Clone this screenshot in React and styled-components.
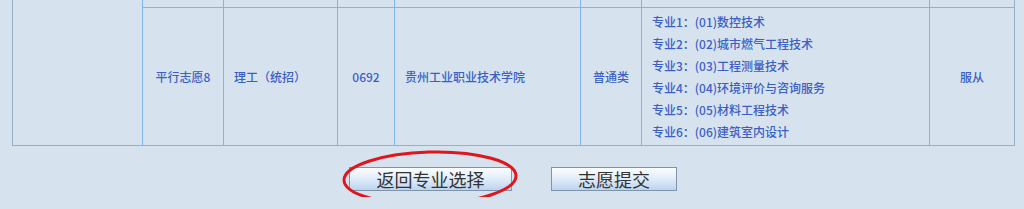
import React from 'react';
import styled, { createGlobalStyle } from 'styled-components';

const GlobalStyle = createGlobalStyle`
    html, body {
        margin: 0;
        padding: 0;
        background: #d6e3ef;
        overflow: hidden;
    }
    body {
        font-family: "Noto Sans CJK SC", "DejaVu Sans", sans-serif;
    }
`;

const Page = styled.div`
    width: 1024px;
    height: 209px;
    padding-left: 12px;
    box-sizing: border-box;
`;

const Table = styled.table`
    width: 1003px;
    margin-top: -12px;
    border-collapse: collapse;
    table-layout: fixed;
    border: 1px solid #98aec4;
    font-size: 12px;
    font-weight: 500;
    color: #3c5fc6;
`;

const Cell = styled.td`
    border: 1px solid #7fb7ec;
    padding: 0 ${(p) => (p.$left ? '10px' : '0')};
    text-align: ${(p) => (p.$left ? 'left' : 'center')};
    vertical-align: middle;
    height: ${(p) => p.$h || 'auto'};
    line-height: 16px;
    white-space: nowrap;
    &:last-child {
        border-right: 1px solid #98aec4;
    }
`;

const GroupCell = styled.td`
    border: 1px solid #98aec4;
    border-right: 1px solid #7fb7ec;
`;

const MajorList = styled.ul`
    list-style: none;
    margin: 0;
    padding: 3px 0 2px;
`;

const Major = styled.li`
    line-height: 22px;
    height: 22px;
`;

const Actions = styled.div`
    display: flex;
    justify-content: center;
    gap: 39px;
    margin-top: 21px;
    padding-right: 10px;
`;

const ButtonWrap = styled.div`
    position: relative;
`;

const Button = styled.button`
    width: ${(p) => p.$w};
    height: 24px;
    border: 1px solid #7f93ab;
    background: linear-gradient(to bottom, #fbfdff 0%, #e3eefa 45%, #bcd4ef 100%);
    font-family: "Noto Sans CJK SC", "DejaVu Sans", sans-serif;
    font-size: 18px;
    line-height: 20px;
    color: #333333;
    padding: 0;
    cursor: pointer;
`;

const Circle = styled.svg`
    position: absolute;
    left: -9px;
    top: -19px;
    pointer-events: none;
    overflow: visible;
`;

const majors = [
    '专业1：(01)数控技术',
    '专业2：(02)城市燃气工程技术',
    '专业3：(03)工程测量技术',
    '专业4：(04)环境评价与咨询服务',
    '专业5：(05)材料工程技术',
    '专业6：(06)建筑室内设计'
];

const widths = [130, 81, 114, 57, 186, 61, 288, 85];

export default function App() {
    return (
        <>
            <GlobalStyle />
            <Page>
                <Table>
                    <colgroup>
                        {widths.map((w, i) => (
                            <col key={i} style={{ width: w }} />
                        ))}
                    </colgroup>
                    <tbody>
                        <tr>
                            <GroupCell rowSpan={2} />
                            <Cell $h="18px" />
                            <Cell />
                            <Cell />
                            <Cell />
                            <Cell />
                            <Cell />
                            <Cell />
                        </tr>
                        <tr>
                            <Cell>平行志愿8</Cell>
                            <Cell $left>理工（统招）</Cell>
                            <Cell>0692</Cell>
                            <Cell $left>贵州工业职业技术学院</Cell>
                            <Cell>普通类</Cell>
                            <Cell $left>
                                <MajorList>
                                    {majors.map((m) => (
                                        <Major key={m}>{m}</Major>
                                    ))}
                                </MajorList>
                            </Cell>
                            <Cell>服从</Cell>
                        </tr>
                    </tbody>
                </Table>
                <Actions>
                    <ButtonWrap>
                        <Button $w="163px">返回专业选择</Button>
                        <Circle width="180" height="58" viewBox="0 0 180 58">
                            <ellipse
                                cx="90"
                                cy="30"
                                rx="86"
                                ry="26"
                                fill="none"
                                stroke="#e0161c"
                                strokeWidth="3"
                                transform="rotate(-1.5 90 30)"
                            />
                        </Circle>
                    </ButtonWrap>
                    <Button $w="126px">志愿提交</Button>
                </Actions>
            </Page>
        </>
    );
}
